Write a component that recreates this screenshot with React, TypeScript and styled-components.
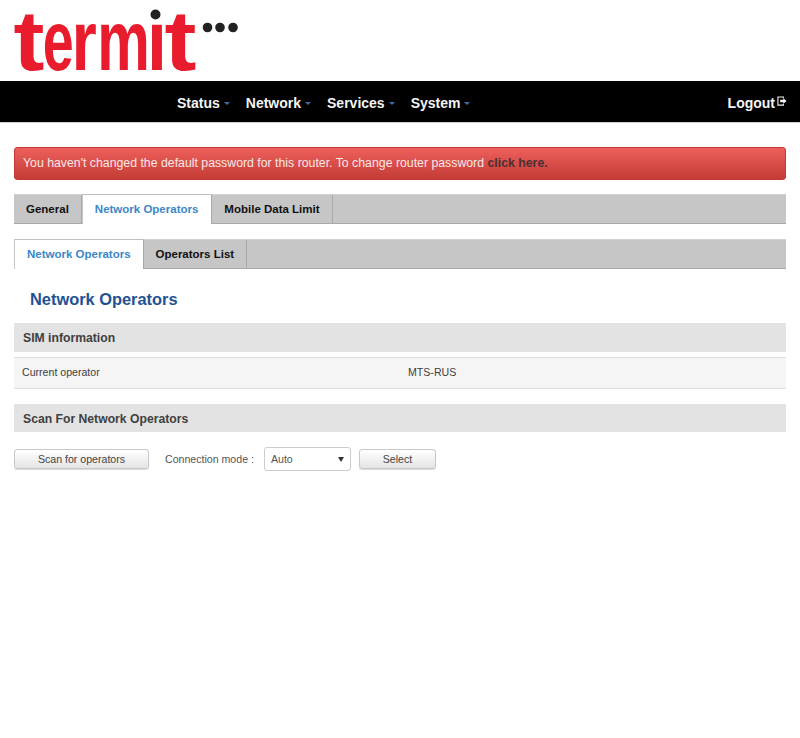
import React from 'react';
import styled, { createGlobalStyle } from 'styled-components';

const GlobalStyle = createGlobalStyle`
  html, body {
    margin: 0;
    padding: 0;
    background: #fff;
    font-family: "Liberation Sans", Arial, sans-serif;
  }
`;

const logoLetters = [
  { ch: 't', x: -0.5, len: 31 },
  { ch: 'e', x: 28.8, len: 31 },
  { ch: 'r', x: 57.7, len: 25 },
  { ch: 'm', x: 83.2, len: 52.6 },
  { ch: 'i', x: 133, len: 20 },
  { ch: 't', x: 150.4, len: 32 },
];

const Page = styled.div`
  width: 800px;
  height: 738px;
  overflow: hidden;
  background: #fff;
`;

const Header = styled.header`
  height: 81px;
  padding-left: 14px;
  display: flex;
  align-items: flex-start;
`;

const Logo = styled.svg`
  display: block;
  overflow: visible;
`;

const LogoWord = styled.text`
  font-family: "Liberation Sans", Arial, sans-serif;
  font-weight: 700;
  font-size: 86px;
  fill: #e81c2c;
`;

const NavBar = styled.nav`
  height: 41px;
  box-sizing: content-box;
  background: #000;
  border-bottom: 1px solid #d0d0d0;
  display: flex;
  align-items: center;
  justify-content: space-between;
  padding: 0 13px 0 177px;
`;

const NavMenu = styled.div`
  display: flex;
  gap: 16px;
  padding-top: 3px;
`;

const NavItem = styled.a`
  color: #f4f4f4;
  font-size: 14px;
  font-weight: 700;
  display: flex;
  align-items: center;
`;

const Caret = styled.span`
  width: 0;
  height: 0;
  margin: 1px 0 0 4px;
  border-left: 3px solid transparent;
  border-right: 3px solid transparent;
  border-top: 3px solid #3a6ea5;
`;

const Logout = styled.a`
  color: #f4f4f4;
  font-size: 14px;
  font-weight: 700;
  display: flex;
  align-items: center;
  padding-top: 3px;
`;

const LogoutIcon = styled.svg`
  margin: -3px 0 0 2px;
`;

const Content = styled.main`
  padding: 24px 14px 0;
`;

const Alert = styled.div`
  height: 31px;
  line-height: 31px;
  padding-left: 8px;
  border: 1px solid #c23a36;
  border-radius: 3px;
  background: linear-gradient(#ee5f5b, #c43c35);
  color: #f8e8e8;
  font-size: 12.3px;
`;

const AlertLink = styled.a`
  color: #4a3035;
  font-weight: 700;
`;

const TabBar = styled.div<{ $top: number }>`
  margin-top: ${p => p.$top}px;
  height: 28px;
  display: flex;
  background: #c6c6c6;
  border-bottom: 1px solid #a9a9a9;
  border-top: 1px solid #d2d2d2;
`;

const Tab = styled.a<{ $active?: boolean; $wide?: boolean }>`
  padding: 0 ${p => (p.$wide ? 13 : 12)}px 0 12px;
  line-height: 28px;
  font-size: 11.5px;
  font-weight: 700;
  color: ${p => (p.$active ? '#3b87c8' : '#111')};
  background: ${p => (p.$active ? '#fff' : 'transparent')};
  border-right: 1px solid #a9a9a9;
  ${p => p.$active && 'margin: -1px 0 -1px; height: 30px; border-top: 1px solid #c0c0c0; box-sizing: border-box; border-left: 1px solid #c6c6c6;'}
`;

const Title = styled.h2`
  margin: 22px 0 15px 16px;
  height: 17px;
  line-height: 17px;
  font-size: 16.4px;
  font-weight: 700;
  color: #1f5293;
`;

const SectionHeader = styled.div<{ $height: number }>`
  background: #e3e3e3;
  height: ${p => p.$height}px;
  line-height: ${p => p.$height + 2}px;
  padding-left: 9px;
  font-size: 12.2px;
  font-weight: 700;
  color: #404040;
`;

const InfoRow = styled.div`
  margin: 5px 0 15px;
  height: 30px;
  display: flex;
  align-items: center;
  background: #f5f5f5;
  border-top: 1px solid #dedede;
  border-bottom: 1px solid #dedede;
  font-size: 10.6px;
  color: #404040;
`;

const InfoCell = styled.div`
  width: 50%;
  padding: 0 0 2px 8px;
  box-sizing: border-box;
`;

const Controls = styled.div`
  display: flex;
  align-items: center;
  margin-top: 15px;
  font-size: 10.6px;
  color: #555;
`;

const Button = styled.button<{ $width: number }>`
  width: ${p => p.$width}px;
  height: 20px;
  padding: 0;
  border: 1px solid #c8c8c8;
  border-radius: 3px;
  background: linear-gradient(#fff, #e4e4e4);
  box-shadow: 0 1px 1px rgba(0, 0, 0, 0.15);
  font-family: inherit;
  font-size: 10.6px;
  color: #444;
`;

const ModeLabel = styled.span`
  margin: 0 10px 0 16px;
`;

const SelectBox = styled.div`
  width: 87px;
  height: 24px;
  margin-right: 8px;
  box-sizing: border-box;
  border: 1px solid #ccc;
  border-radius: 3px;
  padding: 0 6px;
  display: flex;
  align-items: center;
  justify-content: space-between;
  background: #fff;
`;

const SelectArrow = styled.span`
  width: 0;
  height: 0;
  border-left: 3px solid transparent;
  border-right: 3px solid transparent;
  border-top: 5px solid #333;
`;

export default function App() {
  return (
    <Page>
      <GlobalStyle />
      <Header>
        <Logo width="228" height="76" viewBox="0 0 228 76">
          <LogoWord y="69.5">
            {logoLetters.map((l, i) => (
              <tspan key={i} x={l.x} textLength={l.len} lengthAdjust="spacingAndGlyphs">
                {l.ch}
              </tspan>
            ))}
          </LogoWord>
          <rect x="135" y="4" width="16" height="19" fill="#fff" />
          <circle cx="141.5" cy="14.5" r="5" fill="#222" />
          <circle cx="193.5" cy="27.5" r="4.8" fill="#222" />
          <circle cx="206" cy="27.5" r="4.8" fill="#222" />
          <circle cx="219" cy="27.5" r="4.8" fill="#222" />
        </Logo>
      </Header>
      <NavBar>
        <NavMenu>
          {['Status', 'Network', 'Services', 'System'].map(name => (
            <NavItem key={name}>
              {name}
              <Caret />
            </NavItem>
          ))}
        </NavMenu>
        <Logout>
          Logout
          <LogoutIcon width="10" height="11" viewBox="0 0 11 12">
            <path d="M7 2.5V1H1v9h6V8.5" fill="none" stroke="#f4f4f4" strokeWidth="1.2" />
            <path d="M3.5 4.2h3.5V2.5L10.5 5.5 7 8.5V6.8H3.5z" fill="#f4f4f4" />
          </LogoutIcon>
        </Logout>
      </NavBar>
      <Content>
        <Alert>
          You haven't changed the default password for this router. To change router password{' '}
          <AlertLink>click here.</AlertLink>
        </Alert>
        <TabBar $top={14}>
          <Tab>General</Tab>
          <Tab $active $wide>Network Operators</Tab>
          <Tab>Mobile Data Limit</Tab>
        </TabBar>
        <TabBar $top={15}>
          <Tab $active>Network Operators</Tab>
          <Tab>Operators List</Tab>
        </TabBar>
        <Title>Network Operators</Title>
        <SectionHeader $height={29}>SIM information</SectionHeader>
        <InfoRow>
          <InfoCell>Current operator</InfoCell>
          <InfoCell>MTS-RUS</InfoCell>
        </InfoRow>
        <SectionHeader $height={28}>Scan For Network Operators</SectionHeader>
        <Controls>
          <Button $width={135}>Scan for operators</Button>
          <ModeLabel>Connection mode :</ModeLabel>
          <SelectBox>
            Auto
            <SelectArrow />
          </SelectBox>
          <Button $width={77}>Select</Button>
        </Controls>
      </Content>
    </Page>
  );
}
